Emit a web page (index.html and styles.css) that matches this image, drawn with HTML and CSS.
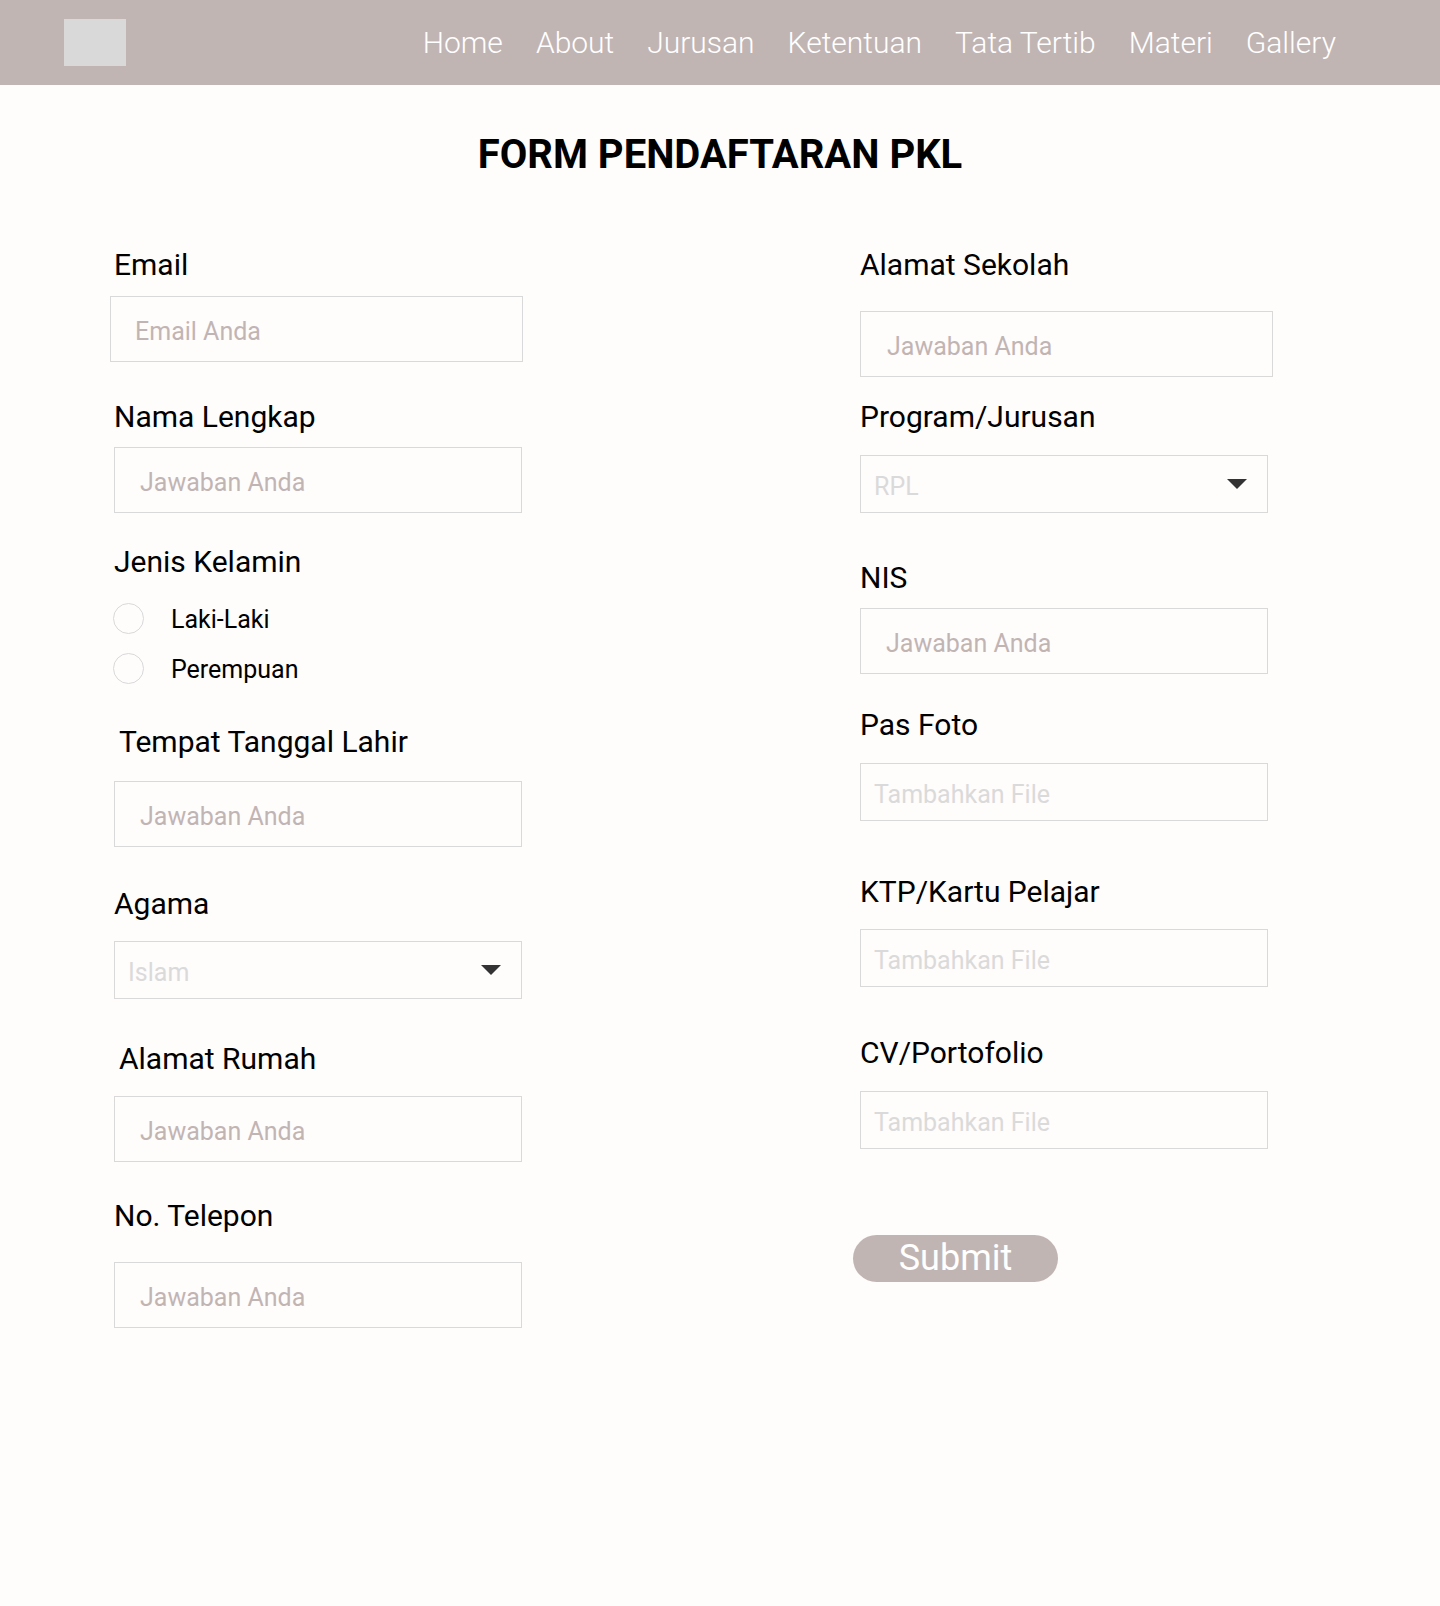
FILE: index.html
```html
<!DOCTYPE html>
<html lang="id">
<head>
<meta charset="utf-8">
<title>Form Pendaftaran PKL</title>
<link rel="stylesheet" href="styles.css">
</head>
<body>
<header class="topbar">
  <div class="logo"></div>
  <nav class="nav">
    <a href="#">Home</a>
    <a href="#">About</a>
    <a href="#">Jurusan</a>
    <a href="#">Ketentuan</a>
    <a href="#">Tata Tertib</a>
    <a href="#">Materi</a>
    <a href="#">Gallery</a>
  </nav>
</header>

<main class="page">
  <h1 class="title">FORM PENDAFTARAN PKL</h1>

  <form class="form">
    <div class="col col-left">
      <div class="field f-email">
        <label class="lbl">Email</label>
        <input class="inp inp-email" type="text" placeholder="Email Anda">
      </div>
      <div class="field f-nama">
        <label class="lbl">Nama Lengkap</label>
        <input class="inp" type="text" placeholder="Jawaban Anda">
      </div>
      <div class="field f-jk">
        <label class="lbl">Jenis Kelamin</label>
        <div class="radios">
          <label class="radio"><span class="circle"></span><span>Laki-Laki</span></label>
          <label class="radio"><span class="circle"></span><span>Perempuan</span></label>
        </div>
      </div>
      <div class="field f-ttl">
        <label class="lbl lbl-in">Tempat Tanggal Lahir</label>
        <input class="inp" type="text" placeholder="Jawaban Anda">
      </div>
      <div class="field f-agama">
        <label class="lbl">Agama</label>
        <div class="select"><span>Islam</span><svg class="caret" width="20" height="10" viewBox="0 0 20 10"><path d="M0 0H20L10 10Z" fill="#333"/></svg></div>
      </div>
      <div class="field f-alamat">
        <label class="lbl lbl-in">Alamat Rumah</label>
        <input class="inp" type="text" placeholder="Jawaban Anda">
      </div>
      <div class="field f-telp">
        <label class="lbl">No. Telepon</label>
        <input class="inp" type="text" placeholder="Jawaban Anda">
      </div>
    </div>

    <div class="col col-right">
      <div class="field f-sekolah">
        <label class="lbl">Alamat Sekolah</label>
        <input class="inp inp-wide" type="text" placeholder="Jawaban Anda">
      </div>
      <div class="field f-prog">
        <label class="lbl">Program/Jurusan</label>
        <div class="select"><span>RPL</span><svg class="caret" width="20" height="10" viewBox="0 0 20 10"><path d="M0 0H20L10 10Z" fill="#333"/></svg></div>
      </div>
      <div class="field f-nis">
        <label class="lbl">NIS</label>
        <input class="inp" type="text" placeholder="Jawaban Anda">
      </div>
      <div class="field f-foto">
        <label class="lbl">Pas Foto</label>
        <div class="file">Tambahkan File</div>
      </div>
      <div class="field f-ktp">
        <label class="lbl">KTP/Kartu Pelajar</label>
        <div class="file">Tambahkan File</div>
      </div>
      <div class="field f-cv">
        <label class="lbl">CV/Portofolio</label>
        <div class="file">Tambahkan File</div>
      </div>
      <button class="submit" type="button">Submit</button>
    </div>
  </form>
</main>
</body>
</html>
```

FILE: styles.css
```css
html, body {
  margin: 0;
  padding: 0;
  background: #fffcfc;
}
body {
  min-height: 1606px;
  font-family: Roboto, "Liberation Sans", sans-serif;
  color: #000;
}

.topbar {
  height: 85px;
  background: #c1b5b4;
  display: flex;
  align-items: center;
  justify-content: space-between;
  padding: 0 104px 0 64px;
  box-sizing: border-box;
}
.logo {
  width: 62px;
  height: 47px;
  background: #d9d9d9;
}
.nav {
  display: flex;
  gap: 33px;
}
.nav a {
  color: #fff;
  text-decoration: none;
  font-size: 30px;
  font-weight: 300;
  line-height: 36px;
}

.page {
  display: flex;
  flex-direction: column;
}
.title {
  margin: 42px 0 0;
  text-align: center;
  font-size: 40px;
  font-weight: 700;
  line-height: 56px;
}

.form {
  display: grid;
  grid-template-columns: 408px 408px;
  column-gap: 338px;
  padding-left: 114px;
  margin-top: 64px;
  align-items: start;
}
.col {
  display: flex;
  flex-direction: column;
}
.field {
  display: flex;
  flex-direction: column;
}
.lbl {
  font-size: 30px;
  line-height: 36px;
  font-weight: 400;
}
.lbl-in { padding-left: 5px; }

.inp {
  box-sizing: border-box;
  width: 408px;
  height: 66px;
  border: 1px solid #d9d9d9;
  background: transparent;
  padding: 4px 25px 0;
  font-family: Roboto, "Liberation Sans", sans-serif;
  font-size: 25px;
  outline: none;
}
.inp::placeholder { color: #c1b5b4; }
.inp-email { width: 413px; margin-left: -4px; padding-left: 24px; }
.inp-wide { width: 413px; padding-left: 26px; }

.select, .file {
  box-sizing: border-box;
  width: 408px;
  height: 58px;
  border: 1px solid #d9d9d9;
  display: flex;
  align-items: center;
  justify-content: space-between;
  padding: 5px 20px 0 13px;
  font-size: 25px;
  color: #dadada;
}
.file { justify-content: flex-start; }
.caret { display: block; margin-top: -5px; }

.radios {
  display: flex;
  flex-direction: column;
  gap: 10px;
  margin-top: 18px;
}
.radio {
  display: flex;
  align-items: center;
  gap: 27px;
  height: 40px;
  font-size: 25px;
  margin-left: -1px;
}
.radio span:last-child { padding-top: 2px; }
.circle {
  box-sizing: border-box;
  width: 31px;
  height: 31px;
  border-radius: 50%;
  border: 1px solid #d9d9d9;
}

/* left column spacing */
.f-email .inp { margin-top: 13px; }
.f-nama { margin-top: 37px; }
.f-nama .inp { margin-top: 12px; }
.f-jk { margin-top: 31px; }
.f-ttl { margin-top: 36px; }
.f-ttl .inp { margin-top: 21px; }
.f-agama { margin-top: 39px; }
.f-agama .select { margin-top: 19px; }
.f-alamat { margin-top: 42px; }
.f-alamat .inp { margin-top: 19px; }
.f-telp { margin-top: 36px; }
.f-telp .inp { margin-top: 28px; }

/* right column spacing */
.f-sekolah .inp { margin-top: 28px; }
.f-prog { margin-top: 22px; }
.f-prog .select { margin-top: 20px; }
.f-nis { margin-top: 47px; }
.f-nis .inp { margin-top: 12px; }
.f-foto { margin-top: 33px; }
.f-foto .file { margin-top: 20px; }
.f-ktp { margin-top: 53px; }
.f-ktp .file { margin-top: 19px; }
.f-cv { margin-top: 48px; }
.f-cv .file { margin-top: 20px; }

.submit {
  align-self: flex-start;
  margin-top: 86px;
  margin-left: -7px;
  width: 205px;
  height: 47px;
  border: none;
  border-radius: 24px;
  background: #c1b5b4;
  color: #fff;
  font-family: Roboto, "Liberation Sans", sans-serif;
  font-size: 36px;
  line-height: 47px;
  padding: 0;
}
```
